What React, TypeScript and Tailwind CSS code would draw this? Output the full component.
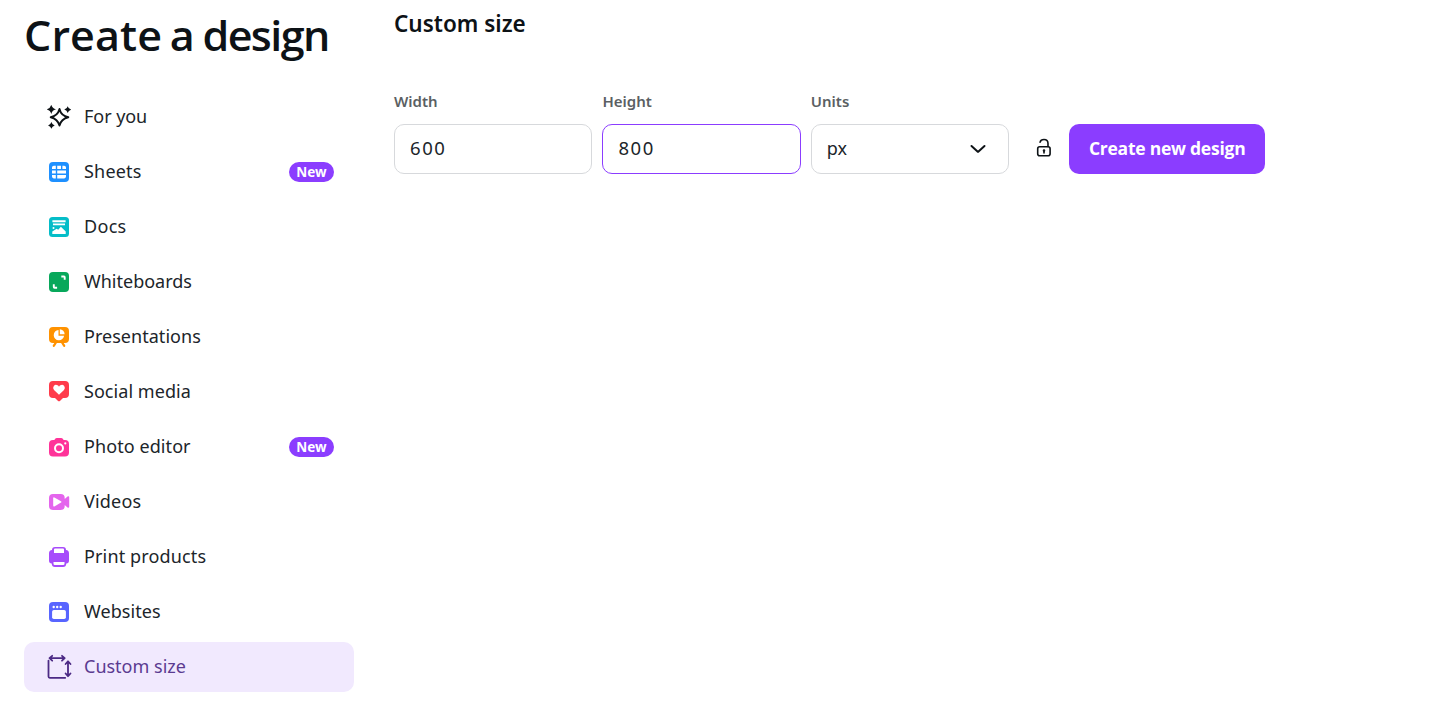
import type { ReactNode } from "react";

function Icon({ children }: { children: ReactNode }) {
  return (
    <svg viewBox="0 0 24 24" className="size-6 shrink-0" fill="none" aria-hidden="true">
      {children}
    </svg>
  );
}

const Sparkles = () => (
  <Icon>
    <path d="M12.5 4q1.6 6.8 8.8 8.2-7.2 1.6-8.8 8.4-1.8-6.8-8.8-8.4 7-1.4 8.8-8.2Z" stroke="#0d1216" strokeWidth="1.9" strokeLinejoin="round" />
    <path d="M4.3-.3q.9 3.7 4.7 4.6-3.8.9-4.7 4.6Q3.4 5.2-.4 4.3 3.4 3.4 4.3-.3ZM20.7 1.2q.7 2.7 3.4 3.4-2.7.7-3.4 3.4-.7-2.7-3.4-3.4 2.7-.7 3.4-3.4ZM4.4 17.1q.7 2.7 3.3 3.3-2.6.7-3.3 3.3-.7-2.6-3.3-3.3 2.6-.6 3.3-3.3Z" fill="#0d1216" />
  </Icon>
);
const Sheets = () => (
  <Icon>
    <rect x="2" y="2" width="20" height="20" rx="4" fill="#1e90ff" />
    <path d="M5 9V7.5Q5 5.700 6.800 5.700H8.800V9ZM10.200 5.700h3.800V9h-3.800ZM15.400 5.700h1.800Q19 5.700 19 7.500V9h-3.600ZM5 10.500h3.800v3.100H5ZM10.200 10.500H19v3.100h-8.800ZM5 15.100h3.800v3.300H6.800Q5 18.400 5 16.600ZM10.200 15.100H19v1.500q0 1.800-1.800 1.800h-7Z" fill="white" />
  </Icon>
);
const Docs = () => (
  <Icon>
    <rect x="2" y="2" width="20" height="20" rx="3.5" fill="#05bdc8" />
    <path d="M5.400 5.200h13.200v2H5.400ZM6 8.600h12v1.700H6ZM5.300 19v-2.600l4.300-2.600 1.600 1 2.700-3 4.800 4.700V19Z" fill="white" />
    <circle cx="6.500" cy="12.900" r="1" fill="white" />
  </Icon>
);
const Whiteboards = () => (
  <Icon>
    <rect x="2" y="2" width="20" height="20" rx="4" fill="#08a85b" />
    <path d="M14.300 6.500h2.700q.7 0 .7.700v2.600M6.800 14.300V17q0 .7.700.7h2.600" stroke="white" strokeWidth="1.900" />
  </Icon>
);
const Presentations = () => (
  <Icon>
    <path d="M6 2h12q4 0 4 4v8q0 4-4 4h-1.300l1.500 2.300q.4.800-.3 1.400-.9.700-1.600-.1L14.100 18H9.900l-2.200 3.600q-.7.800-1.600.1-.7-.600-.3-1.400L7.300 18H6q-4 0-4-4V6q0-4 4-4Z" fill="#ff9200" />
    <path d="M11.500 4.900a5.200 5.200 0 1 0 5.600 5.800h-5.600Z" fill="white" />
    <path d="M12.800 4.200a5 5 0 0 1 4.800 5h-4.800Z" fill="white" />
  </Icon>
);
const Social = () => (
  <Icon>
    <path d="M6 1h12q4 0 4 4v9q0 4-4 4h-2l-2.800 2.700q-1.200 1-2.400 0L8 18H6q-4 0-4-4V5q0-4 4-4Z" fill="#ff3b4b" />
    <path d="M12 14.800 7 10Q5.300 8 6.800 6q1.600-1.900 3.800-.7.900.500 1.400 1.400.5-.9 1.400-1.400 2.200-1.200 3.800.7 1.500 2-.2 4Z" fill="white" />
  </Icon>
);
const Camera = () => (
  <Icon>
    <path d="M6 5.100h1.300l.9-1.300Q8.800 3 9.900 3h4.200q1.100 0 1.700.8l.9 1.300H18q4 0 4 4v8.300q0 4-4 4H6q-4 0-4-4V9.100q0-4 4-4Z" fill="#ff3399" />
    <circle cx="12" cy="13.200" r="4" stroke="white" strokeWidth="2" />
    <circle cx="18.300" cy="8.400" r="1.100" fill="white" />
  </Icon>
);
const Video = () => (
  <Icon>
    <path d="M6 4h7.700q4 0 4 4v1l2.800-2.400q1.700-1 1.700.8v9.200q0 1.800-1.700.8L17.700 15v1q0 4-4 4H6q-4 0-4-4V8q0-4 4-4Z" fill="#e465ed" />
    <path d="M6.200 8.300q0-1.300 1.200-.8l6.600 3.700q1.200.7 0 1.400l-6.600 3.800q-1.200.500-1.200-.8Z" fill="white" />
  </Icon>
);
const Printer = () => (
  <Icon>
    <path d="M8 2h8q3 0 3 3 3 0 3 3.500v7q0 3-2.700 3-.2 3.500-3.300 3.500H8q-3.100 0-3.300-3.500Q2 18.500 2 15.500v-7Q2 5 5 5q0-3 3-3Z" fill="#a74bfb" />
    <path d="M8 3.600h8q1 0 1 1V8H7V4.600q0-1 1-1ZM6.500 17h11v1.700q0 1.300-1.300 1.300H7.800q-1.300 0-1.300-1.300Z" fill="white" />
  </Icon>
);
const Website = () => (
  <Icon>
    <rect x="2" y="2" width="20" height="20" rx="4" fill="#5865ff" />
    <rect x="5.100" y="10" width="13.800" height="9" rx="1.800" fill="white" />
    <circle cx="6.700" cy="7" r="1.200" fill="white" />
    <circle cx="10.200" cy="7" r="1.200" fill="white" />
    <circle cx="13.700" cy="7" r="1.200" fill="white" />
  </Icon>
);
const CustomSize = () => (
  <svg viewBox="0 0 26 26" className="-mx-px size-[26px] shrink-0" fill="none" stroke="#4c2a85" strokeWidth="1.8" strokeLinecap="round" strokeLinejoin="round" aria-hidden="true">
    <path d="M2.500 6.600v16q0 1.200 1.200 1.200h15.500M4 4.200h14M6.200 1.800 3.500 4.200l2.700 2.500M16 1.800l2.700 2.400L16 6.700M22 7.800v14M19.600 10 22 7.300l2.500 2.700M19.600 19.500l2.400 2.700 2.500-2.700" />
  </svg>
);

const items = [
  { label: "For you", icon: <Sparkles />, tracking: "tracking-[-0.05px]" },
  { label: "Sheets", icon: <Sheets />, isNew: true, tracking: "tracking-[0.2px]" },
  { label: "Docs", icon: <Docs />, tracking: "tracking-[0.3px]" },
  { label: "Whiteboards", icon: <Whiteboards />, tracking: "" },
  { label: "Presentations", icon: <Presentations />, tracking: "tracking-[0.03px]" },
  { label: "Social media", icon: <Social />, tracking: "tracking-[0.05px]" },
  { label: "Photo editor", icon: <Camera />, isNew: true, tracking: "tracking-[0.08px]" },
  { label: "Videos", icon: <Video />, tracking: "tracking-[0.2px]" },
  { label: "Print products", icon: <Printer />, tracking: "tracking-[0.14px]" },
  { label: "Websites", icon: <Website />, tracking: "tracking-[0.08px]" },
  { label: "Custom size", icon: <CustomSize />, selected: true, tracking: "" },
];

function Field({ label, children, focused }: { label: string; children: ReactNode; focused?: boolean }) {
  return (
    <div className="flex w-[198.4px] flex-col">
      <span className="mb-[13px] text-[15px] leading-5 font-semibold text-[#5b5f63]">{label}</span>
      <div className={`flex h-[50px] items-center justify-between rounded-[10px] border pr-[21px] pb-0.5 pl-[15px] text-[18px] text-[#20252a] ${focused ? "border-[#8b3dff]" : "border-[#d7d9dc]"}`}>
        {children}
      </div>
    </div>
  );
}

export default function App() {
  return (
    <div className="flex h-[702px] w-full overflow-hidden bg-white font-['Noto_Sans',sans-serif] text-[#0d1216]">
      <aside className="w-[354px] shrink-0 pl-6">
        <h1 className="h-[92px] origin-left scale-x-[1.05] pt-[9px] font-['Open_Sans',sans-serif] text-[41px] leading-[52px] font-semibold tracking-[0.1px] whitespace-nowrap [word-spacing:-3.5px]">
          Create a <span className="tracking-[-1.5px]">design</span>
        </h1>
        <nav className="flex flex-col gap-[5px]">
          {items.map((item) => (
            <a key={item.label} className={`flex h-[50px] items-center gap-[13px] rounded-[10px] pr-5 pl-[23px] text-[18px] ${item.selected ? "bg-[#f1e9fe] text-[#5b3b91]" : "text-[#20252a]"}`}>
              {item.icon}
              <span className={`grow pb-0.5 whitespace-nowrap ${item.tracking}`}>{item.label}</span>
              {item.isNew && (
                <span className="flex h-5 w-[45px] items-center justify-center rounded-full bg-[#8b3dff] text-[13.5px] leading-5 font-bold text-white">New</span>
              )}
            </a>
          ))}
        </nav>
      </aside>
      <main className="pl-10">
        <h2 className="pt-2 text-[22.5px] leading-8 font-semibold">Custom size</h2>
        <div className="mt-[51px] flex items-end">
          <div className="flex gap-[10px]">
            <Field label="Width"><span className="text-[18.5px] tracking-[1.6px]">600</span></Field>
            <Field label="Height" focused><span className="text-[18.5px] tracking-[1.6px]">800</span></Field>
            <Field label="Units">
              px
              <svg viewBox="0 0 18 12" className="mt-0.5 h-3 w-[18px]" fill="none" stroke="#0d1216" strokeWidth="2" strokeLinecap="round" strokeLinejoin="round" aria-hidden="true">
                <path d="m2.500 3 6 5.500q.5.500 1 0l6-5.500" />
              </svg>
            </Field>
          </div>
          <button className="mb-[16px] ml-[25px] flex size-5 items-center justify-center" aria-label="Unlock ratio">
            <svg viewBox="0 0 20 20" className="size-5" fill="none" stroke="#0d1216" strokeWidth="1.6" strokeLinecap="round" aria-hidden="true">
              <rect x="3.700" y="8.800" width="12.400" height="9" rx="2" />
              <path d="M6.100 4.100q.6-2.600 3.900-2.600 4 0 4 4v3M10 13v2" />
              <circle cx="10" cy="12.500" r=".5" fill="#0d1216" />
            </svg>
          </button>
          <button className="ml-[15px] h-[50px] w-[196px] rounded-[10px] bg-[#8b3dff] pb-0.5 font-['Open_Sans',sans-serif] text-[17.5px] font-bold tracking-[-0.25px] whitespace-nowrap text-white">
            Create new design
          </button>
        </div>
      </main>
    </div>
  );
}
